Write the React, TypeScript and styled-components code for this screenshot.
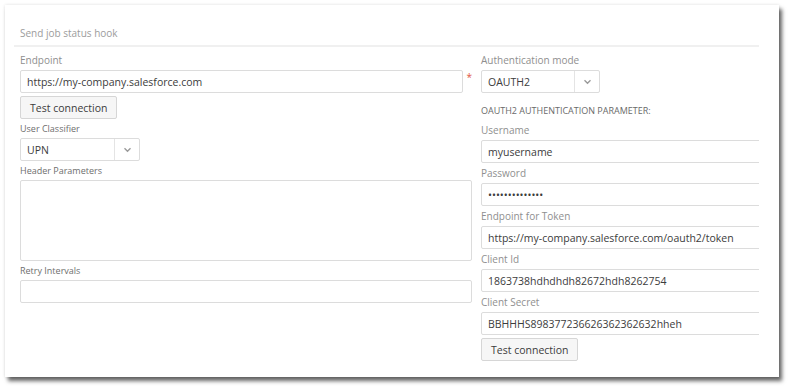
import React from 'react'
import styled, { createGlobalStyle } from 'styled-components'

const GlobalStyle = createGlobalStyle`
    html, body {
        margin: 0;
        padding: 0;
        background: #fff;
        font-family: 'Open Sans', 'Liberation Sans', sans-serif;
    }
`

const Page = styled.div`
    padding: 5px 0 9px 5px;
`

const Card = styled.div`
    box-sizing: border-box;
    width: 774px;
    height: 372px;
    background: #fff;
    box-shadow: 3px 4px 4px rgba(0, 0, 0, 0.6), 0 0 3px rgba(0, 0, 0, 0.12);
    padding-left: 9px;
`

const Panel = styled.div`
    width: 745px;
    overflow: hidden;
`

const Header = styled.div`
    padding: 21px 0 5px 6px;
    font-size: 10px;
    line-height: 14px;
    color: #9c9c9c;
    border-bottom: 2px solid #f0f0f0;
`

const Form = styled.div`
    display: grid;
    grid-template-columns: 452px 452px;
    column-gap: 9px;
    padding: 4px 6px 0 6px;
`

const Column = styled.div`
    display: flex;
    flex-direction: column;
    align-items: flex-start;
`

const Label = styled.div<{ $dark?: boolean; $loose?: boolean }>`
    font-size: ${(p) => (p.$dark ? '9px' : '10px')};
    line-height: 13px;
    margin: ${(p) => (p.$loose ? '4px' : '3px')} 0 3px 0;
    color: ${(p) => (p.$dark ? '#6e6e6e' : '#8f8f8f')};
`

const SectionTitle = styled.div`
    font-size: 9px;
    line-height: 13px;
    margin: 11px 0 3px 0;
    color: #6a6a6a;
`

const Row = styled.div`
    display: flex;
    width: 100%;
`

const Required = styled.span`
    width: 9px;
    text-align: right;
    color: #e0573f;
    font-size: 10px;
    line-height: 14px;
`

const Input = styled.input`
    box-sizing: border-box;
    width: 100%;
    height: 23px;
    border: 1px solid #dcdcdc;
    border-radius: 2px;
    padding: 0 6px;
    font-family: 'Open Sans', 'Liberation Sans', sans-serif;
    font-size: 10.5px;
    color: #3c3c3c;
    background: #fff;
    outline: none;
`

const Textarea = styled.textarea`
    box-sizing: border-box;
    width: 100%;
    height: 81px;
    border: 1px solid #dcdcdc;
    border-radius: 2px;
    resize: none;
    outline: none;
    font-family: 'Open Sans', 'Liberation Sans', sans-serif;
`

const Button = styled.button`
    box-sizing: border-box;
    height: 23px;
    margin-top: 3px;
    padding: 0 9px;
    border: 1px solid #d6d6d6;
    border-radius: 2px;
    background: #f6f6f6;
    font-family: 'Open Sans', 'Liberation Sans', sans-serif;
    font-size: 10.5px;
    color: #3c3c3c;
`

const Select = styled.div<{ $width: number }>`
    box-sizing: border-box;
    display: flex;
    align-items: center;
    width: ${(p) => p.$width}px;
    height: 23px;
    border: 1px solid #dcdcdc;
    border-radius: 2px;
    font-size: 10.5px;
    color: #3c3c3c;
`

const SelectValue = styled.span`
    flex: 1;
    padding-left: 6px;
`

const SelectArrow = styled.span`
    display: flex;
    align-items: center;
    justify-content: center;
    width: 24px;
    height: 100%;
    border-left: 1px solid #e4e4e4;
`

const Chevron = () => (
    <svg width="9" height="6" viewBox="0 0 9 6">
        <polyline points="1.5,1.2 4.5,4.2 7.5,1.2" fill="none" stroke="#9a9a9a" strokeWidth="1.4" />
    </svg>
)

const Dropdown = ({ value, width }: { value: string; width: number }) => (
    <Select $width={width}>
        <SelectValue>{value}</SelectValue>
        <SelectArrow>
            <Chevron />
        </SelectArrow>
    </Select>
)

const RightField = ({ label, value, type }: { label: string; value: string; type?: string }) => (
    <>
        <Label $loose>{label}</Label>
        <Input readOnly type={type || 'text'} value={value} />
    </>
)

export default function App() {
    return (
        <>
            <GlobalStyle />
            <Page>
                <Card>
                    <Panel>
                        <Header>Send job status hook</Header>
                        <Form>
                            <Column>
                                <Label>Endpoint</Label>
                                <Row>
                                    <Input readOnly value="https://my-company.salesforce.com" />
                                    <Required>*</Required>
                                </Row>
                                <Button>Test connection</Button>
                                <Label $dark>User Classifier</Label>
                                <Dropdown value="UPN" width={120} />
                                <Label $dark>Header Parameters</Label>
                                <Textarea readOnly />
                                <Label $dark>Retry Intervals</Label>
                                <Input readOnly value="" />
                            </Column>
                            <Column>
                                <Label>Authentication mode</Label>
                                <Dropdown value="OAUTH2" width={119} />
                                <SectionTitle>OAUTH2 AUTHENTICATION PARAMETER:</SectionTitle>
                                <RightField label="Username" value="myusername" />
                                <RightField label="Password" value="xxxxxxxxxxxxxx" type="password" />
                                <RightField label="Endpoint for Token" value="https://my-company.salesforce.com/oauth2/token" />
                                <RightField label="Client Id" value="1863738hdhdhdh82672hdh8262754" />
                                <RightField label="Client Secret" value="BBHHHS898377236626362362632hheh" />
                                <Button>Test connection</Button>
                            </Column>
                        </Form>
                    </Panel>
                </Card>
            </Page>
        </>
    )
}
